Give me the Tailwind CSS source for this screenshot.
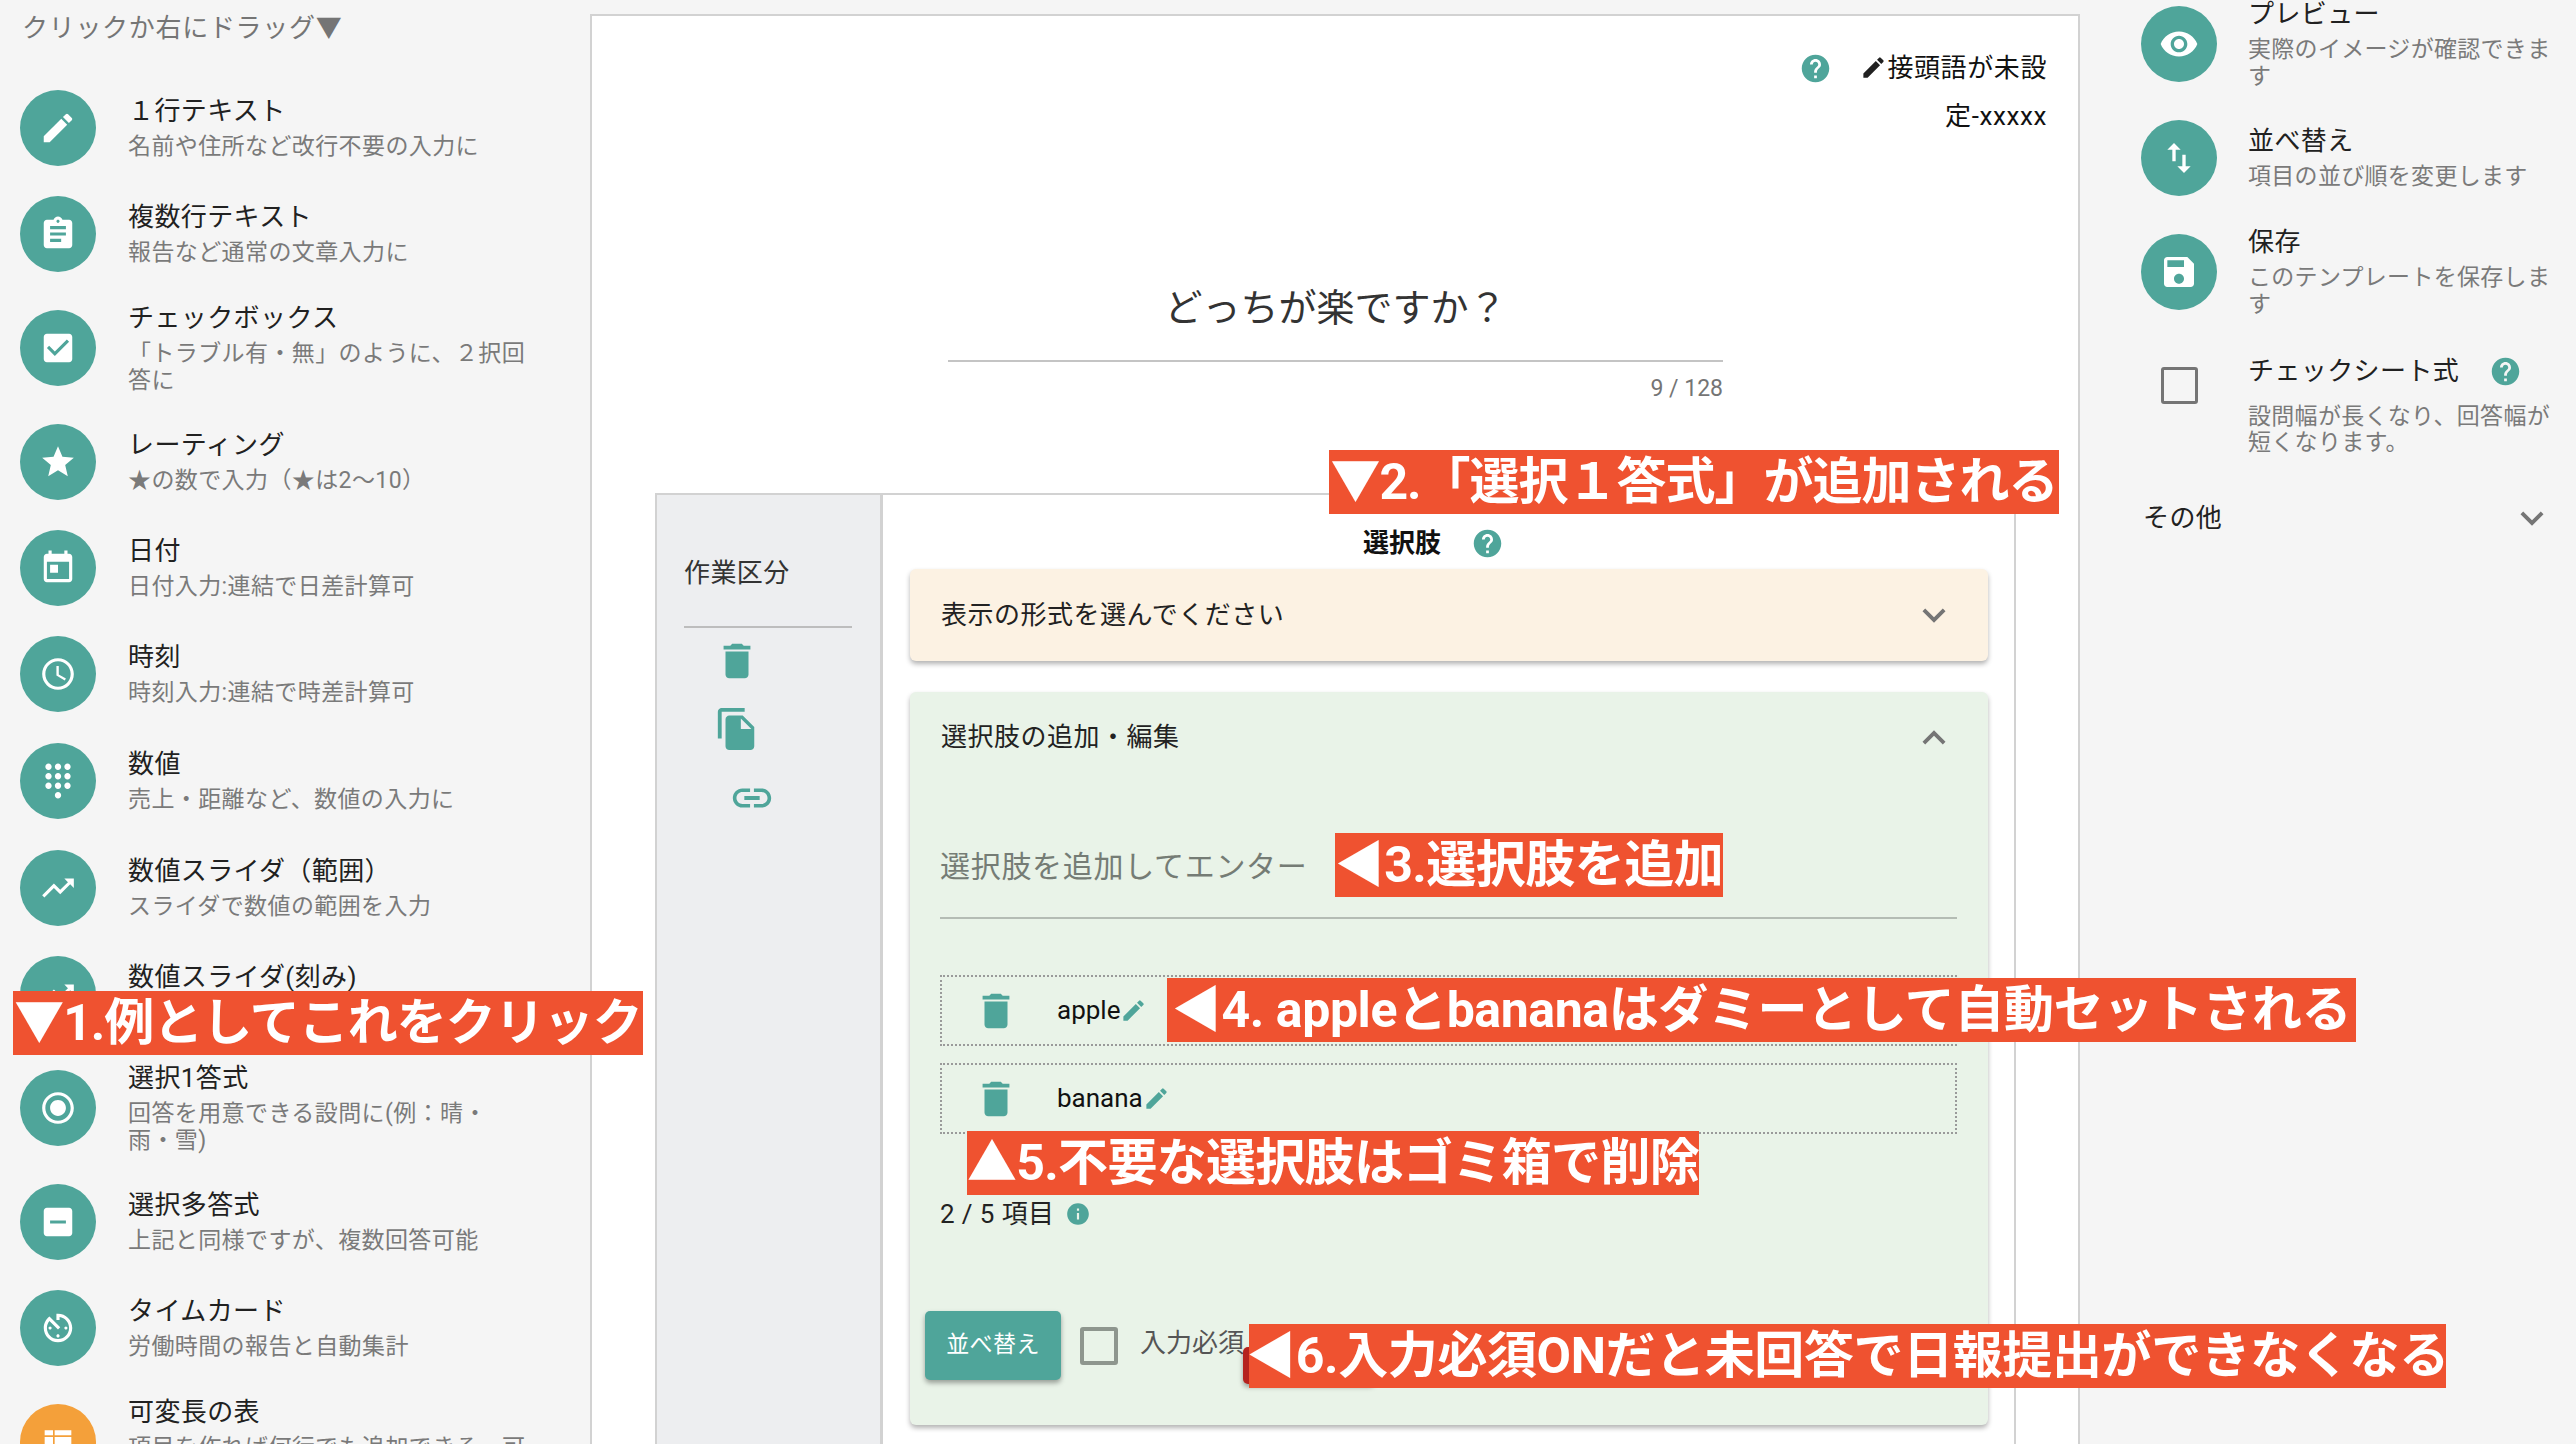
<!DOCTYPE html>
<html lang="ja">
<head>
  <meta charset="utf-8">
  <title>テンプレート編集</title>
  <script src="https://cdn.jsdelivr.net/npm/@tailwindcss/browser@4"></script>
</head>
<body class="bg-[#f5f5f5] font-['Roboto','Noto_Sans_CJK_JP',sans-serif] text-[#212121]">
<div class="relative flex h-[1444px] w-[2576px] overflow-hidden">

  <!-- left: parts list -->
  <aside class="w-[590px] shrink-0">
    <p class="ml-[22px] h-[75px] pt-[10px] text-[26px] leading-[36px] tracking-[0.7px] text-[#757575]">クリックか右にドラッグ▼</p>

    <div class="flex h-[106px] items-center pl-[20px]">
      <span class="flex h-[76px] w-[76px] shrink-0 items-center justify-center rounded-full bg-[#4fa59a]"><svg class="h-[38px] w-[38px] fill-white" viewBox="0 0 24 24"><path d="M3 17.25V21h3.75L17.81 9.94l-3.75-3.75L3 17.25zM20.71 7.04a1 1 0 0 0 0-1.41l-2.34-2.34a1 1 0 0 0-1.41 0l-1.83 1.83 3.75 3.75 1.83-1.83z"/></svg></span>
      <div class="ml-[32px] w-[405px] pb-[7px]"><p class="text-[26px] leading-[44px] tracking-[0.4px]">１行テキスト</p><p class="text-[23px] leading-[27px] tracking-[0.4px] text-[#7a7a7a]">名前や住所など改行不要の入力に</p></div>
    </div>
    <div class="flex h-[106px] items-center pl-[20px]">
      <span class="flex h-[76px] w-[76px] shrink-0 items-center justify-center rounded-full bg-[#4fa59a]"><svg class="h-[38px] w-[38px] fill-white" viewBox="0 0 24 24"><path d="M19 3h-4.18C14.4 1.84 13.3 1 12 1c-1.3 0-2.4.84-2.82 2H5c-1.1 0-2 .9-2 2v14c0 1.1.9 2 2 2h14c1.1 0 2-.9 2-2V5c0-1.1-.9-2-2-2zm-7 0c.55 0 1 .45 1 1s-.45 1-1 1-1-.45-1-1 .45-1 1-1zm2 14H7v-2h7v2zm3-4H7v-2h10v2zm0-4H7V7h10v2z"/></svg></span>
      <div class="ml-[32px] w-[405px] pb-[7px]"><p class="text-[26px] leading-[44px] tracking-[0.4px]">複数行テキスト</p><p class="text-[23px] leading-[27px] tracking-[0.4px] text-[#7a7a7a]">報告など通常の文章入力に</p></div>
    </div>
    <div class="flex h-[122px] items-center pl-[20px]">
      <span class="flex h-[76px] w-[76px] shrink-0 items-center justify-center rounded-full bg-[#4fa59a]"><svg class="h-[38px] w-[38px] fill-white" viewBox="0 0 24 24"><path d="M19 3H5c-1.11 0-2 .9-2 2v14c0 1.1.89 2 2 2h14c1.11 0 2-.9 2-2V5c0-1.1-.89-2-2-2zm-9 14l-5-5 1.41-1.41L10 14.17l7.59-7.59L19 8l-9 9z"/></svg></span>
      <div class="ml-[32px] w-[405px] pb-[7px]"><p class="text-[26px] leading-[44px] tracking-[0.4px]">チェックボックス</p><p class="text-[23px] leading-[27px] tracking-[0.4px] text-[#7a7a7a]">「トラブル有・無」のように、２択回答に</p></div>
    </div>
    <div class="flex h-[106px] items-center pl-[20px]">
      <span class="flex h-[76px] w-[76px] shrink-0 items-center justify-center rounded-full bg-[#4fa59a]"><svg class="h-[38px] w-[38px] fill-white" viewBox="0 0 24 24"><path d="M12 17.27L18.18 21l-1.64-7.03L22 9.24l-7.19-.61L12 2 9.19 8.63 2 9.24l5.46 4.73L5.82 21z"/></svg></span>
      <div class="ml-[32px] w-[405px] pb-[7px]"><p class="text-[26px] leading-[44px] tracking-[0.4px]">レーティング</p><p class="text-[23px] leading-[27px] tracking-[0.4px] text-[#7a7a7a]">★の数で入力（★は2〜10）</p></div>
    </div>
    <div class="flex h-[106px] items-center pl-[20px]">
      <span class="flex h-[76px] w-[76px] shrink-0 items-center justify-center rounded-full bg-[#4fa59a]"><svg class="h-[38px] w-[38px] fill-white" viewBox="0 0 24 24"><path d="M19 3h-1V1h-2v2H8V1H6v2H5c-1.11 0-1.99.9-1.99 2L3 19c0 1.1.89 2 2 2h14c1.1 0 2-.9 2-2V5c0-1.1-.9-2-2-2zm0 16H5V8h14v11zM7 10h5v5H7z"/></svg></span>
      <div class="ml-[32px] w-[405px] pb-[7px]"><p class="text-[26px] leading-[44px] tracking-[0.4px]">日付</p><p class="text-[23px] leading-[27px] tracking-[0.4px] text-[#7a7a7a]">日付入力:連結で日差計算可</p></div>
    </div>
    <div class="flex h-[106px] items-center pl-[20px]">
      <span class="flex h-[76px] w-[76px] shrink-0 items-center justify-center rounded-full bg-[#4fa59a]"><svg class="h-[38px] w-[38px] fill-white" viewBox="0 0 24 24"><path d="M11.99 2C6.47 2 2 6.48 2 12s4.47 10 9.99 10C17.52 22 22 17.52 22 12S17.52 2 11.99 2zM12 20c-4.42 0-8-3.58-8-8s3.58-8 8-8 8 3.58 8 8-3.58 8-8 8zm.5-13H11v6l5.25 3.15.75-1.23-4.5-2.67z"/></svg></span>
      <div class="ml-[32px] w-[405px] pb-[7px]"><p class="text-[26px] leading-[44px] tracking-[0.4px]">時刻</p><p class="text-[23px] leading-[27px] tracking-[0.4px] text-[#7a7a7a]">時刻入力:連結で時差計算可</p></div>
    </div>
    <div class="flex h-[108px] items-center pl-[20px]">
      <span class="flex h-[76px] w-[76px] shrink-0 items-center justify-center rounded-full bg-[#4fa59a]"><svg class="h-[38px] w-[38px] fill-white" viewBox="0 0 24 24"><path d="M12 19c-1.1 0-2 .9-2 2s.9 2 2 2 2-.9 2-2-.9-2-2-2zM6 1c-1.1 0-2 .9-2 2s.9 2 2 2 2-.9 2-2-.9-2-2-2zm0 6c-1.1 0-2 .9-2 2s.9 2 2 2 2-.9 2-2-.9-2-2-2zm0 6c-1.1 0-2 .9-2 2s.9 2 2 2 2-.9 2-2-.9-2-2-2zm12-8c1.1 0 2-.9 2-2s-.9-2-2-2-2 .9-2 2 .9 2 2 2zm-6 8c-1.1 0-2 .9-2 2s.9 2 2 2 2-.9 2-2-.9-2-2-2zm6 0c-1.1 0-2 .9-2 2s.9 2 2 2 2-.9 2-2-.9-2-2-2zm0-6c-1.1 0-2 .9-2 2s.9 2 2 2 2-.9 2-2-.9-2-2-2zm-6 0c-1.1 0-2 .9-2 2s.9 2 2 2 2-.9 2-2-.9-2-2-2zm0-6c-1.1 0-2 .9-2 2s.9 2 2 2 2-.9 2-2-.9-2-2-2z"/></svg></span>
      <div class="ml-[32px] w-[405px] pb-[7px]"><p class="text-[26px] leading-[44px] tracking-[0.4px]">数値</p><p class="text-[23px] leading-[27px] tracking-[0.4px] text-[#7a7a7a]">売上・距離など、数値の入力に</p></div>
    </div>
    <div class="flex h-[106px] items-center pl-[20px]">
      <span class="flex h-[76px] w-[76px] shrink-0 items-center justify-center rounded-full bg-[#4fa59a]"><svg class="h-[38px] w-[38px] fill-white" viewBox="0 0 24 24"><path d="M16 6l2.29 2.29-4.88 4.88-4-4L2 16.59 3.41 18l6-6 4 4 6.3-6.29L22 12V6z"/></svg></span>
      <div class="ml-[32px] w-[405px] pb-[7px]"><p class="text-[26px] leading-[44px] tracking-[0.4px]">数値スライダ（範囲）</p><p class="text-[23px] leading-[27px] tracking-[0.4px] text-[#7a7a7a]">スライダで数値の範囲を入力</p></div>
    </div>
    <div class="flex h-[106px] items-center pl-[20px]">
      <span class="flex h-[76px] w-[76px] shrink-0 items-center justify-center rounded-full bg-[#4fa59a]"><svg class="h-[38px] w-[38px] fill-white" viewBox="0 0 24 24"><path d="M16 6l2.29 2.29-4.88 4.88-4-4L2 16.59 3.41 18l6-6 4 4 6.3-6.29L22 12V6z"/></svg></span>
      <div class="ml-[32px] w-[405px] pb-[7px]"><p class="text-[26px] leading-[44px] tracking-[0.4px]">数値スライダ(刻み)</p><p class="text-[23px] leading-[27px] tracking-[0.4px] text-[#7a7a7a]">スライダで数値を入力</p></div>
    </div>
    <div class="flex h-[122px] items-center pl-[20px]">
      <span class="flex h-[76px] w-[76px] shrink-0 items-center justify-center rounded-full bg-[#4fa59a]"><svg class="h-[38px] w-[38px] fill-white" viewBox="0 0 24 24"><path d="M12 7c-2.76 0-5 2.24-5 5s2.24 5 5 5 5-2.24 5-5-2.24-5-5-5zm0-5C6.48 2 2 6.48 2 12s4.48 10 10 10 10-4.48 10-10S17.52 2 12 2zm0 18c-4.42 0-8-3.58-8-8s3.58-8 8-8 8 3.58 8 8-3.58 8-8 8z"/></svg></span>
      <div class="ml-[32px] w-[405px] pb-[7px]"><p class="text-[26px] leading-[44px] tracking-[0.4px]">選択1答式</p><p class="text-[23px] leading-[27px] tracking-[0.4px] text-[#7a7a7a]">回答を用意できる設問に(例：晴・<br>雨・雪)</p></div>
    </div>
    <div class="flex h-[106px] items-center pl-[20px]">
      <span class="flex h-[76px] w-[76px] shrink-0 items-center justify-center rounded-full bg-[#4fa59a]"><svg class="h-[38px] w-[38px] fill-white" viewBox="0 0 24 24"><path d="M19 3H5c-1.1 0-2 .9-2 2v14c0 1.1.9 2 2 2h14c1.1 0 2-.9 2-2V5c0-1.1-.9-2-2-2zm-2 10H7v-2h10v2z"/></svg></span>
      <div class="ml-[32px] w-[405px] pb-[7px]"><p class="text-[26px] leading-[44px] tracking-[0.4px]">選択多答式</p><p class="text-[23px] leading-[27px] tracking-[0.4px] text-[#7a7a7a]">上記と同様ですが、複数回答可能</p></div>
    </div>
    <div class="flex h-[106px] items-center pl-[20px]">
      <span class="flex h-[76px] w-[76px] shrink-0 items-center justify-center rounded-full bg-[#4fa59a]"><svg class="h-[38px] w-[38px] fill-white" viewBox="0 0 24 24"><path d="M11 17c0 .55.45 1 1 1s1-.45 1-1-.45-1-1-1-1 .45-1 1zm0-14v4h2V5.08c3.39.49 6 3.39 6 6.92 0 3.87-3.13 7-7 7s-7-3.13-7-7c0-1.68.59-3.22 1.58-4.42L12 13l1.41-1.41-6.8-6.8v.02C4.42 6.45 3 9.05 3 12c0 4.97 4.02 9 9 9 4.97 0 9-4.03 9-9s-4.03-9-9-9h-1zm7 9c0-.55-.45-1-1-1s-1 .45-1 1 .45 1 1 1 1-.45 1-1zM6 12c0 .55.45 1 1 1s1-.45 1-1-.45-1-1-1-1 .45-1 1z"/></svg></span>
      <div class="ml-[32px] w-[405px] pb-[7px]"><p class="text-[26px] leading-[44px] tracking-[0.4px]">タイムカード</p><p class="text-[23px] leading-[27px] tracking-[0.4px] text-[#7a7a7a]">労働時間の報告と自動集計</p></div>
    </div>
    <div class="flex h-[122px] items-center pl-[20px]">
      <span class="flex h-[76px] w-[76px] shrink-0 items-center justify-center rounded-full bg-[#f4a03a]"><svg class="h-[40px] w-[40px] fill-white" viewBox="0 0 24 24"><path d="M4 5h5v3H4zM10 5h10v3H10zM4 9h5v5H4zM10 9h10v5H10zM4 15h5v4H4zM10 15h10v4H10z"/></svg></span>
      <div class="ml-[32px] w-[405px] pb-[7px]"><p class="text-[26px] leading-[44px] tracking-[0.4px]">可変長の表</p><p class="text-[23px] leading-[27px] tracking-[0.4px] text-[#7a7a7a]">項目を作れば何行でも追加できる。可変長の表</p></div>
    </div>
  </aside>

  <!-- center: form preview -->
  <main class="mt-[14px] h-[1500px] w-[1490px] shrink-0 border-2 border-[#d2d2d2] bg-white">
    <div class="flex justify-end pt-[28px] pr-[31px]">
      <svg class="mt-[8px] mr-[25px] h-[33px] w-[33px] fill-[#4fa59a]" viewBox="0 0 24 24"><path d="M12 2C6.48 2 2 6.48 2 12s4.48 10 10 10 10-4.48 10-10S17.52 2 12 2zm1 17h-2v-2h2v2zm2.07-7.75l-.9.92C13.45 12.9 13 13.5 13 15h-2v-.5c0-1.1.45-2.1 1.17-2.83l1.24-1.26c.37-.36.59-.86.59-1.41 0-1.1-.9-2-2-2s-2 .9-2 2H8c0-2.21 1.79-4 4-4s4 1.79 4 4c0 .88-.36 1.68-.93 2.25z"/></svg>
      <p class="w-[190px] text-right text-[26px] leading-[48px] tracking-[0.6px] text-[#111]"><svg class="inline h-[27px] w-[27px] fill-[#212121] align-[-4px]" viewBox="0 0 24 24"><path d="M3 17.25V21h3.75L17.81 9.94l-3.75-3.75L3 17.25zM20.71 7.04a1 1 0 0 0 0-1.41l-2.34-2.34a1 1 0 0 0-1.41 0l-1.83 1.83 3.75 3.75 1.83-1.83z"/></svg>接頭語が未設定-xxxxx</p>
    </div>

    <div class="mt-[138px] ml-[356px] w-[775px]">
      <div class="border-b-2 border-[#c4c4c4] pb-[22px] text-center text-[38px] leading-[60px] text-[#333]">どっちが楽ですか？</div>
      <p class="mt-[13px] text-right text-[23px] leading-[28px] text-[#757575]">9 / 128</p>
    </div>

    <div class="mt-[90px] ml-[63px] flex h-[1000px] w-[1361px] border-2 border-[#d2d2d2]">
      <div class="w-[226px] shrink-0 border-r-[3px] border-[#d2d2d2] bg-[#edeef0] pt-[60px] pl-[27px]">
        <p class="text-[26px] leading-[36px] tracking-[0.4px] text-[#333]">作業区分</p>
        <div class="mt-[35px] w-[168px] border-b-2 border-[#bdbdbd]"></div>
        <svg class="mt-[10px] ml-[30px] h-[46px] w-[46px] fill-[#4fa59a]" viewBox="0 0 24 24"><path d="M6 19c0 1.1.9 2 2 2h8c1.1 0 2-.9 2-2V7H6v12zM19 4h-3.5l-1-1h-5l-1 1H5v2h14V4z"/></svg>
        <svg class="mt-[22px] ml-[30px] h-[46px] w-[46px] fill-[#4fa59a]" viewBox="0 0 24 24"><path d="M16 1H4c-1.1 0-2 .9-2 2v14h2V3h12V1zm-1 4l6 6v10c0 1.1-.9 2-2 2H7.99C6.89 23 6 22.1 6 21l.01-14c0-1.1.89-2 1.99-2h7zm-1 7h5.5L14 6.5V12z"/></svg>
        <svg class="mt-[23px] ml-[45px] h-[46px] w-[46px] fill-[#4fa59a]" viewBox="0 0 24 24"><path d="M3.9 12c0-1.71 1.39-3.1 3.1-3.1h4V7H7c-2.76 0-5 2.24-5 5s2.24 5 5 5h4v-1.9H7c-1.71 0-3.1-1.39-3.1-3.1zM8 13h8v-2H8v2zm9-6h-4v1.9h4c1.71 0 3.1 1.39 3.1 3.1s-1.39 3.1-3.1 3.1h-4V17h4c2.76 0 5-2.24 5-5s-2.24-5-5-5z"/></svg>
      </div>

      <div class="flex-1 pt-[30px]">
        <div class="ml-[480px] flex h-[36px] items-center gap-[30px]">
          <b class="text-[26px] leading-[36px] text-[#111]">選択肢</b>
          <svg class="h-[33px] w-[33px] fill-[#4fa59a]" viewBox="0 0 24 24"><path d="M12 2C6.48 2 2 6.48 2 12s4.48 10 10 10 10-4.48 10-10S17.52 2 12 2zm1 17h-2v-2h2v2zm2.07-7.75l-.9.92C13.45 12.9 13 13.5 13 15h-2v-.5c0-1.1.45-2.1 1.17-2.83l1.24-1.26c.37-.36.59-.86.59-1.41 0-1.1-.9-2-2-2s-2 .9-2 2H8c0-2.21 1.79-4 4-4s4 1.79 4 4c0 .88-.36 1.68-.93 2.25z"/></svg>
        </div>

        <div class="mt-[8px] ml-[27px] flex h-[92px] w-[1078px] items-center justify-between rounded-[6px] bg-[#fcf2e3] pr-[31px] pl-[31px] shadow-[0_3px_5px_rgba(0,0,0,0.3)]">
          <span class="text-[26px] tracking-[0.5px] text-[#222]">表示の形式を選んでください</span>
          <svg class="h-[46px] w-[46px] fill-[#757575]" viewBox="0 0 24 24"><path d="M16.59 8.59L12 13.17 7.41 8.59 6 10l6 6 6-6z"/></svg>
        </div>

        <div class="mt-[31px] ml-[27px] h-[733px] w-[1078px] rounded-[6px] bg-[#e9f3e8] shadow-[0_3px_5px_rgba(0,0,0,0.3)]">
          <div class="flex h-[91px] items-center justify-between pr-[31px] pl-[31px]">
            <span class="text-[26px] tracking-[0.5px] text-[#222]">選択肢の追加・編集</span>
            <svg class="h-[46px] w-[46px] fill-[#757575]" viewBox="0 0 24 24"><path d="M12 8l-6 6 1.41 1.41L12 10.83l4.59 4.58L18 14z"/></svg>
          </div>

          <div class="mt-[64px] ml-[30px] h-[72px] w-[1017px] border-b-2 border-[#b4bcb4] text-[30px] leading-[40px] tracking-[0.7px] text-[#757c75]">選択肢を追加してエンター</div>

          <div class="mt-[56px] ml-[30px] flex h-[71px] w-[1017px] items-center border-2 border-dotted border-[#9a9a9a] pl-[31px]">
            <svg class="h-[46px] w-[46px] fill-[#4fa59a]" viewBox="0 0 24 24"><path d="M6 19c0 1.1.9 2 2 2h8c1.1 0 2-.9 2-2V7H6v12zM19 4h-3.5l-1-1h-5l-1 1H5v2h14V4z"/></svg>
            <span class="ml-[38px] text-[26px] text-[#111]">apple</span>
            <svg class="h-[27px] w-[27px] fill-[#4fa59a]" viewBox="0 0 24 24"><path d="M3 17.25V21h3.75L17.81 9.94l-3.75-3.75L3 17.25zM20.71 7.04a1 1 0 0 0 0-1.41l-2.34-2.34a1 1 0 0 0-1.41 0l-1.83 1.83 3.75 3.75 1.83-1.83z"/></svg>
          </div>
          <div class="mt-[17px] ml-[30px] flex h-[71px] w-[1017px] items-center border-2 border-dotted border-[#9a9a9a] pl-[31px]">
            <svg class="h-[46px] w-[46px] fill-[#4fa59a]" viewBox="0 0 24 24"><path d="M6 19c0 1.1.9 2 2 2h8c1.1 0 2-.9 2-2V7H6v12zM19 4h-3.5l-1-1h-5l-1 1H5v2h14V4z"/></svg>
            <span class="ml-[38px] text-[26px] text-[#111]">banana</span>
            <svg class="h-[27px] w-[27px] fill-[#4fa59a]" viewBox="0 0 24 24"><path d="M3 17.25V21h3.75L17.81 9.94l-3.75-3.75L3 17.25zM20.71 7.04a1 1 0 0 0 0-1.41l-2.34-2.34a1 1 0 0 0-1.41 0l-1.83 1.83 3.75 3.75 1.83-1.83z"/></svg>
          </div>

          <div class="mt-[62px] ml-[30px] flex h-[36px] items-center gap-[10px]">
            <span class="text-[26px] leading-[36px] tracking-[0.4px] text-[#222]">2 / 5 項目</span>
            <svg class="h-[26px] w-[26px] fill-[#4fa59a]" viewBox="0 0 24 24"><path d="M12 2C6.48 2 2 6.48 2 12s4.48 10 10 10 10-4.48 10-10S17.52 2 12 2zm1 15h-2v-6h2v6zm0-8h-2V7h2v2z"/></svg>
          </div>

          <div class="mt-[79px] ml-[15px] flex h-[69px] items-center">
            <button class="h-[69px] w-[136px] rounded-[5px] bg-[#4fa59a] text-[23px] tracking-[0.4px] text-white shadow-[0_3px_5px_rgba(0,0,0,0.35)]">並べ替え</button>
            <span class="ml-[19px] h-[38px] w-[38px] rounded-[3px] border-[4px] border-[#8e968e]"></span>
            <span class="ml-[22px] pb-[4px] text-[26px] text-[#555]">入力必須</span>
            <span class="mt-[36px] -ml-[1px] h-[37px] w-[132px] shrink-0 self-start rounded-[5px] bg-[#b5231f] shadow-[0_3px_5px_rgba(0,0,0,0.35)]"></span>
          </div>
        </div>
      </div>
    </div>
  </main>

  <!-- right: actions -->
  <aside class="-mt-[17px] flex-1">
    <div class="flex h-[122px] items-center pl-[61px]">
      <span class="flex h-[76px] w-[76px] shrink-0 items-center justify-center rounded-full bg-[#4fa59a]"><svg class="h-[40px] w-[40px] fill-white" viewBox="0 0 24 24"><path d="M12 4.5C7 4.5 2.73 7.61 1 12c1.73 4.39 6 7.5 11 7.5s9.27-3.11 11-7.5c-1.73-4.39-6-7.5-11-7.5zM12 17c-2.76 0-5-2.24-5-5s2.24-5 5-5 5 2.24 5 5-2.24 5-5 5zm0-8c-1.66 0-3 1.34-3 3s1.34 3 3 3 3-1.34 3-3-1.34-3-3-3z"/></svg></span>
      <div class="ml-[31px] w-[315px] pb-[7px]"><p class="text-[26px] leading-[44px] tracking-[0.4px]">プレビュー</p><p class="text-[23px] leading-[27px] tracking-[0.3px] text-[#7a7a7a]">実際のイメージが確認できます</p></div>
    </div>
    <div class="flex h-[106px] items-center pl-[61px]">
      <span class="flex h-[76px] w-[76px] shrink-0 items-center justify-center rounded-full bg-[#4fa59a]"><svg class="h-[40px] w-[40px] fill-white" viewBox="0 0 24 24"><path d="M16 17.01V10h-2v7.01h-3L15 21l4-3.99h-3zM9 3L5 6.99h3V14h2V6.99h3L9 3z"/></svg></span>
      <div class="ml-[31px] w-[315px] pb-[7px]"><p class="text-[26px] leading-[44px] tracking-[0.4px]">並べ替え</p><p class="text-[23px] leading-[27px] tracking-[0.3px] text-[#7a7a7a]">項目の並び順を変更します</p></div>
    </div>
    <div class="flex h-[122px] items-center pl-[61px]">
      <span class="flex h-[76px] w-[76px] shrink-0 items-center justify-center rounded-full bg-[#4fa59a]"><svg class="h-[40px] w-[40px] fill-white" viewBox="0 0 24 24"><path d="M17 3H5c-1.11 0-2 .9-2 2v14c0 1.1.89 2 2 2h14c1.1 0 2-.9 2-2V7l-4-4zm-5 16c-1.66 0-3-1.34-3-3s1.34-3 3-3 3 1.34 3 3-1.34 3-3 3zm3-10H5V5h10v4z"/></svg></span>
      <div class="ml-[31px] w-[315px] pb-[7px]"><p class="text-[26px] leading-[44px] tracking-[0.4px]">保存</p><p class="text-[23px] leading-[27px] tracking-[0.3px] text-[#7a7a7a]">このテンプレートを保存します</p></div>
    </div>
    <div class="flex items-start pl-[61px]">
      <div class="flex w-[76px] shrink-0 justify-center pt-[34px]"><span class="h-[37px] w-[37px] rounded-[3px] border-[3px] border-[#757575]"></span></div>
      <div class="ml-[31px] w-[315px] pt-[16px]">
        <div class="flex h-[44px] items-center gap-[30px]">
          <span class="text-[26px] leading-[44px] tracking-[0.4px]">チェックシート式</span>
          <svg class="h-[33px] w-[33px] fill-[#4fa59a]" viewBox="0 0 24 24"><path d="M12 2C6.48 2 2 6.48 2 12s4.48 10 10 10 10-4.48 10-10S17.52 2 12 2zm1 17h-2v-2h2v2zm2.07-7.75l-.9.92C13.45 12.9 13 13.5 13 15h-2v-.5c0-1.1.45-2.1 1.17-2.83l1.24-1.26c.37-.36.59-.86.59-1.41 0-1.1-.9-2-2-2s-2 .9-2 2H8c0-2.21 1.79-4 4-4s4 1.79 4 4c0 .88-.36 1.68-.93 2.25z"/></svg>
        </div>
        <p class="mt-[11px] text-[23px] leading-[26px] tracking-[0.3px] text-[#7a7a7a]">設問幅が長くなり、回答幅が短くなります。</p>
      </div>
    </div>
    <div class="mt-[44px] flex h-[36px] items-center justify-between pr-[21px] pl-[63px]">
      <span class="text-[26px] leading-[36px] tracking-[0.4px]">その他</span>
      <svg class="h-[46px] w-[46px] fill-[#757575]" viewBox="0 0 24 24"><path d="M16.59 8.59L12 13.17 7.41 8.59 6 10l6 6 6-6z"/></svg>
    </div>
  </aside>

  <!-- orange tutorial labels over the screenshot -->
  <div class="absolute top-[991px] left-[13px] flex h-[64px] w-[630px] items-center justify-center overflow-hidden bg-[#ef5230] text-[50px] font-bold tracking-[-1px] whitespace-nowrap text-white">▼1.例としてこれをクリック</div>
  <div class="absolute top-[450px] left-[1329px] flex h-[64px] w-[730px] items-center justify-center overflow-hidden bg-[#ef5230] text-[50px] font-bold tracking-[-1px] whitespace-nowrap text-white">▼2.「選択１答式」が追加される</div>
  <div class="absolute top-[833px] left-[1335px] flex h-[64px] w-[388px] items-center justify-center overflow-hidden bg-[#ef5230] text-[50px] font-bold tracking-[-0.5px] whitespace-nowrap text-white">◀3.選択肢を追加</div>
  <div class="absolute top-[978px] left-[1167px] flex h-[64px] w-[1189px] items-center justify-center overflow-hidden bg-[#ef5230] text-[50px] font-bold tracking-[-0.4px] whitespace-nowrap text-white">◀4. appleとbananaはダミーとして自動セットされる</div>
  <div class="absolute top-[1131px] left-[967px] flex h-[64px] w-[732px] items-center justify-center overflow-hidden bg-[#ef5230] text-[50px] font-bold tracking-[-0.7px] whitespace-nowrap text-white">▲5.不要な選択肢はゴミ箱で削除</div>
  <div class="absolute top-[1324px] left-[1249px] flex h-[64px] w-[1197px] items-center justify-center overflow-hidden bg-[#ef5230] text-[50px] font-bold tracking-[-0.4px] whitespace-nowrap text-white">◀6.入力必須ONだと未回答で日報提出ができなくなる</div>
</div>
</body>
</html>
